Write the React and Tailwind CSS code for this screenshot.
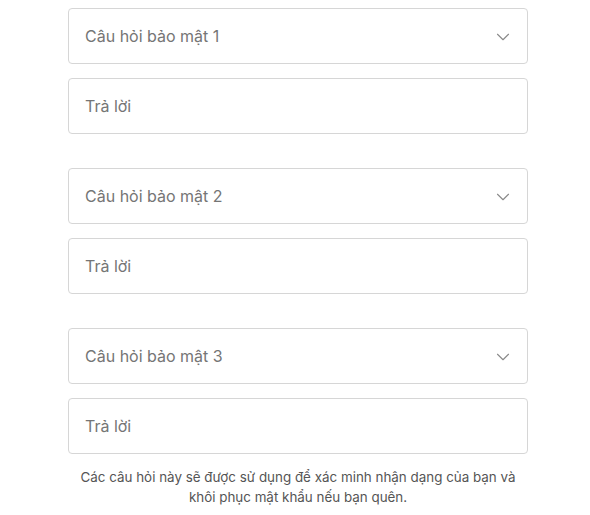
import { ChevronDown } from "lucide-react";

const Group = ({ n }) => (
    <div className="flex flex-col gap-[14px]">
        <div className="h-14 border border-[#d6d6d6] rounded-[4px] bg-white flex items-center justify-between pl-4 pr-[13px]">
            <span className="text-[16px] text-[#757575]">Câu hỏi bảo mật {n}</span>
            <ChevronDown size={22} strokeWidth={1.2} className="text-[#8a8a8a] mt-[1px]" />
        </div>
        <div className="h-14 border border-[#d6d6d6] rounded-[4px] bg-white flex items-center pl-4">
            <span className="text-[16px] text-[#757575]">Trả lời</span>
        </div>
    </div>
)

const App = () => {
    return (
        <div className="w-[590px] h-[515px] bg-white font-['Inter',sans-serif] pt-2 overflow-hidden">
            <div className="w-[460px] ml-[68px] flex flex-col gap-[34px]">
                <Group n={1} />
                <Group n={2} />
                <Group n={3} />
            </div>
            <p className="w-[460px] ml-[68px] mt-[14px] text-center text-[13.4px] leading-[19.5px] text-[#555]">
                Các câu hỏi này sẽ được sử dụng để xác minh nhận dạng của bạn và
                <br />
                khôi phục mật khẩu nếu bạn quên.
            </p>
        </div>
    )
}

export default App
